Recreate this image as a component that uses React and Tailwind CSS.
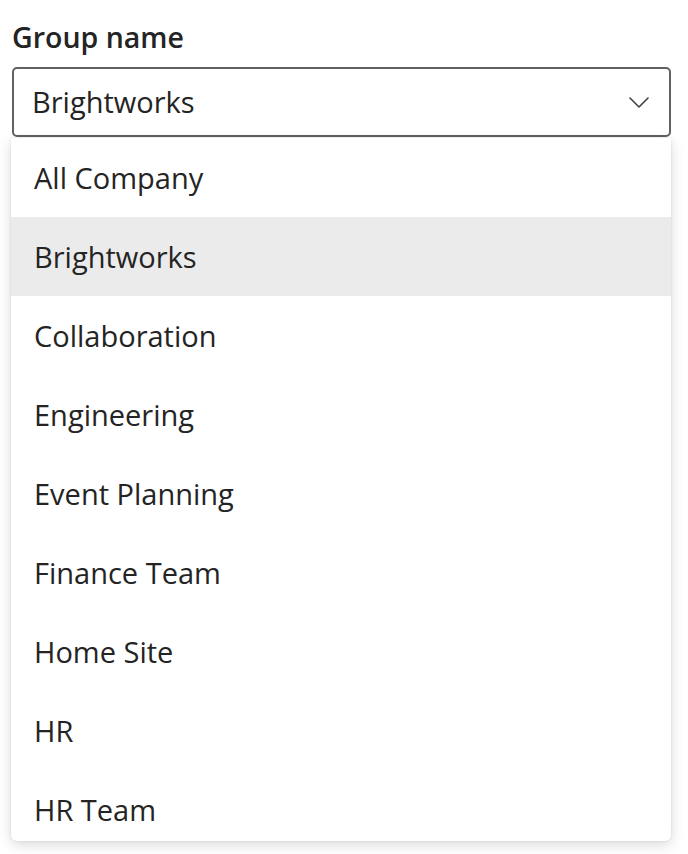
import React, { useState } from 'react'

const groups = [
  'All Company',
  'Brightworks',
  'Collaboration',
  'Engineering',
  'Event Planning',
  'Finance Team',
  'Home Site',
  'HR',
  'HR Team',
]

const Chevron = () => (
  <svg width="20" height="11" viewBox="0 0 20 11" fill="none">
    <path d="M1 1l9 9 9-9" stroke="#424242" strokeWidth="1.6" strokeLinecap="round" strokeLinejoin="round" />
  </svg>
)

export default function App() {
  const [selected] = useState('Brightworks')

  return (
    <div
      className="w-[688px] h-[854px] bg-white overflow-hidden text-[#242424]"
      style={{ fontFamily: '"Open Sans", "Noto Sans", sans-serif' }}
    >
      <div className="pl-[12px] pt-[17px]">
        {/* Label */}
        <div className="text-[28.5px] leading-[40px] font-semibold">Group name</div>

        {/* Select */}
        <div className="mt-[10px] w-[659px] h-[70px] border-2 border-[#616161] rounded-[5px] flex items-center justify-between pl-[18px] pr-[20px]">
          <span className="text-[29px]">{selected}</span>
          <Chevron />
        </div>

        {/* Listbox */}
        <div className="-ml-[1px] mt-[1px] w-[660px] h-[703px] overflow-hidden rounded-b-[6px] bg-white shadow-[0_4px_14px_rgba(0,0,0,0.14),0_0_3px_rgba(0,0,0,0.1)]">
          {groups.map((g) => (
            <div
              key={g}
              className={`h-[79px] flex items-center pl-[23px] text-[29px] ${g === selected ? 'bg-[#ebebeb]' : ''}`}
            >
              {g}
            </div>
          ))}
        </div>
      </div>
    </div>
  )
}
